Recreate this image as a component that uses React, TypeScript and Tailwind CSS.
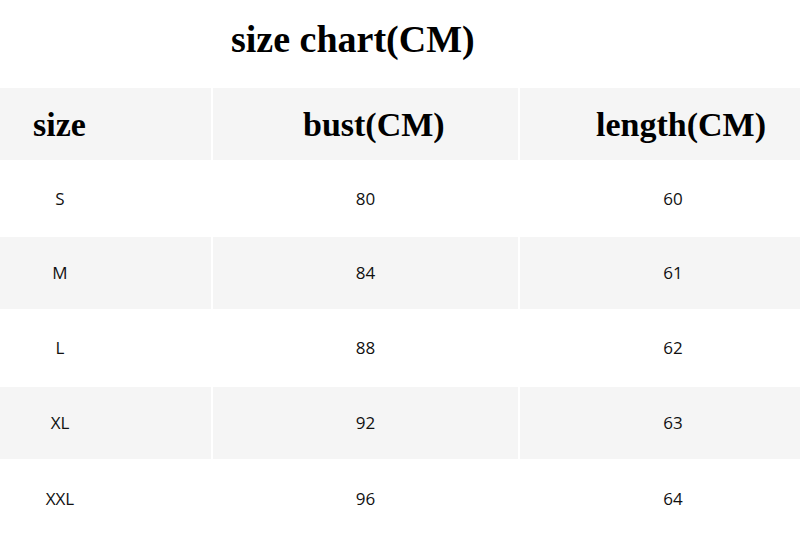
const rows = [
  { size: "S", bust: "80", length: "60", h: "h-[77px]", shaded: false },
  { size: "M", bust: "84", length: "61", h: "h-[72px]", shaded: true },
  { size: "L", bust: "88", length: "62", h: "h-[78px]", shaded: false },
  { size: "XL", bust: "92", length: "63", h: "h-[72px]", shaded: true },
  { size: "XXL", bust: "96", length: "64", h: "h-[79px]", shaded: false },
];

const serif = "font-['Liberation_Serif','Times_New_Roman',serif] font-bold text-black";
const sans = "font-['Open_Sans','Liberation_Sans',sans-serif] text-[17px] text-[#111]";

export default function App() {
  return (
    <div className="h-[538px] w-[800px] overflow-hidden bg-white">
      <div className={`flex h-[88px] items-center pb-[10px] pl-[231px] text-[38px] ${serif}`}>
        size chart(CM)
      </div>

      <div className="grid h-[72px] grid-cols-[211px_305px_1fr] gap-x-[2px]">
        <div className={`flex items-center bg-[#f5f5f5] pl-[33px] text-[34px] ${serif}`}>size</div>
        <div className={`flex items-center bg-[#f5f5f5] pl-[90px] text-[34px] ${serif}`}>bust(CM)</div>
        <div className={`flex items-center bg-[#f5f5f5] pl-[76px] text-[34px] ${serif}`}>length(CM)</div>
      </div>

      {rows.map((r) => (
        <div
          key={r.size}
          className={`grid grid-cols-[211px_305px_1fr] gap-x-[2px] ${r.h}`}
        >
          <div className={`flex items-center ${r.shaded ? "bg-[#f5f5f5]" : "bg-white"} ${sans}`}>
            <span className="w-[120px] text-center">{r.size}</span>
          </div>
          <div className={`flex items-center justify-center ${r.shaded ? "bg-[#f5f5f5]" : "bg-white"} ${sans}`}>
            {r.bust}
          </div>
          <div className={`flex items-center justify-center pl-[26px] ${r.shaded ? "bg-[#f5f5f5]" : "bg-white"} ${sans}`}>
            {r.length}
          </div>
        </div>
      ))}
    </div>
  );
}
